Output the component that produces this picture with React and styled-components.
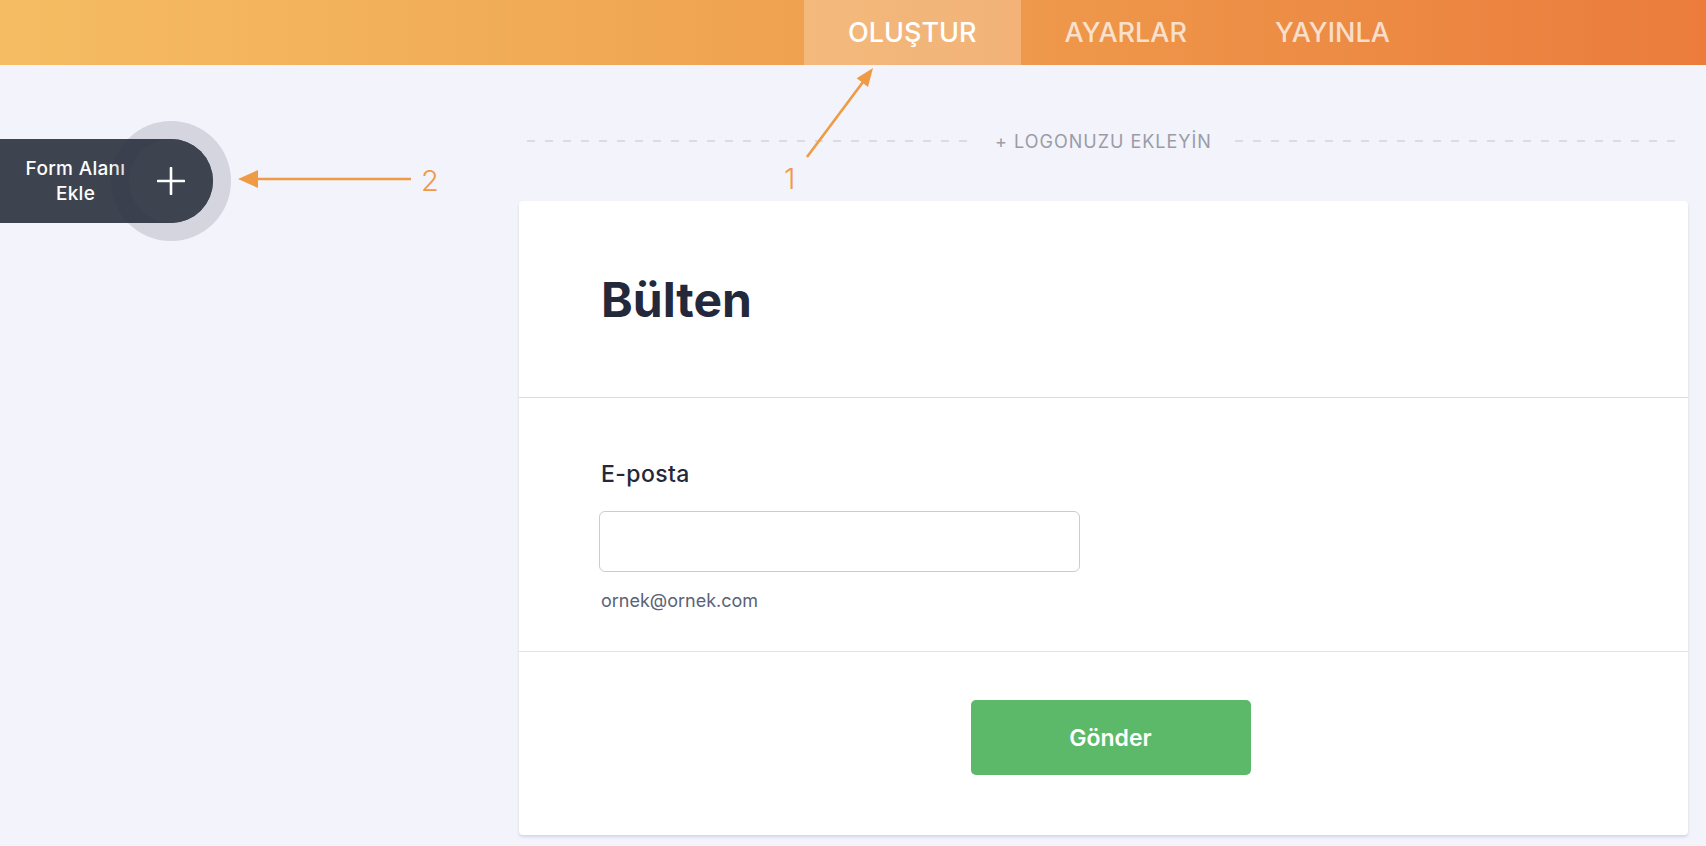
import React from "react";
import styled, { createGlobalStyle } from "styled-components";

const GlobalStyle = createGlobalStyle`
  * {
    box-sizing: border-box;
  }
  body {
    margin: 0;
    background: #f2f3fb;
    font-family: Inter, "Noto Sans", sans-serif;
    overflow: hidden;
  }
`;

const tabs = ["OLUŞTUR", "AYARLAR", "YAYINLA"];

const App = () => {
  return (
    <Page>
      <GlobalStyle />
      <TopBar>
        {tabs.map((t, i) => (
          <Tab key={t} active={i === 0}>
            {t}
          </Tab>
        ))}
      </TopBar>

      <Main>
        <Sidebar>
          <AddField>
            <AddLabel>
              Form Alanı
              <br />
              Ekle
            </AddLabel>
            <PlusCircle>
              <svg width="28" height="28" viewBox="0 0 28 28">
                <path
                  d="M14 1v26M1 14h26"
                  stroke="#fff"
                  strokeWidth="2.6"
                  strokeLinecap="round"
                />
              </svg>
            </PlusCircle>
          </AddField>
        </Sidebar>

        <Content>
          <LogoRow>
            <Dashes />
            <LogoText>+ LOGONUZU EKLEYİN</LogoText>
            <Dashes />
          </LogoRow>

          <Card>
            <TitleSection>
              <Title>Bülten</Title>
            </TitleSection>

            <FieldSection>
              <Label>E-posta</Label>
              <Input type="text" />
              <Hint>ornek@ornek.com</Hint>
            </FieldSection>

            <SubmitSection>
              <SubmitButton>Gönder</SubmitButton>
            </SubmitSection>
          </Card>
        </Content>
      </Main>

      {/* annotation arrows drawn over the screenshot */}
      <Annotations>
        <svg width="1706" height="846" viewBox="0 0 1706 846">
          <g stroke="#ef9a45" strokeWidth="2.6" fill="#ef9a45">
            <line x1="807" y1="157" x2="863" y2="82" />
            <polygon points="873,68 868,87 856.7,78.3" stroke="none" />
            <line x1="411" y1="179" x2="255" y2="179" />
            <polygon points="238,179 258,170 258,188" stroke="none" />
          </g>
        </svg>
        <Num x={784} y={164}>1</Num>
        <Num x={421} y={166}>2</Num>
      </Annotations>
    </Page>
  );
};

export default App;

/* -------------------------------------------------------------------------- */
/*                                   STYLES                                   */
/* -------------------------------------------------------------------------- */
const Page = styled.div`
  position: relative;
  width: 1706px;
  height: 846px;
  background: #f2f3fb;
`;

const TopBar = styled.header`
  height: 65px;
  display: flex;
  align-items: stretch;
  padding-left: 804px;
  background: linear-gradient(90deg, #f5bd63 0%, #efa04f 50%, #eb7c3c 100%);
`;

const Tab = styled.div`
  display: flex;
  align-items: center;
  padding: 0 44px;
  font-size: 27px;
  font-weight: 500;
  color: ${(p) => (p.active ? "#ffffff" : "rgba(255, 255, 255, 0.72)")};
  background: ${(p) => (p.active ? "rgba(255, 255, 255, 0.25)" : "transparent")};
`;

const Main = styled.main`
  display: grid;
  grid-template-columns: 519px 1fr;
  padding-right: 18px;
`;

const Sidebar = styled.aside`
  padding-top: 74px;
`;

const AddField = styled.div`
  display: flex;
  align-items: center;
  width: 213px;
  height: 84px;
  background: #3e444f;
  border-radius: 0 42px 42px 0;
`;

const AddLabel = styled.div`
  flex: 1;
  padding-left: 22px;
  text-align: center;
  color: #ffffff;
  font-size: 19px;
  letter-spacing: 0.3px;
  font-weight: 500;
  line-height: 25px;
`;

const PlusCircle = styled.div`
  width: 84px;
  height: 84px;
  border-radius: 50%;
  background: #3e444f;
  display: flex;
  align-items: center;
  justify-content: center;
  box-shadow: 0 0 0 18px rgba(40, 45, 70, 0.15);
`;

const Content = styled.section`
  padding-top: 64px;
`;

const LogoRow = styled.div`
  height: 24px;
  margin: 0 8px 48px;
  display: flex;
  align-items: center;
  gap: 23px;
`;

const Dashes = styled.div`
  flex: 1;
  height: 2px;
  background: repeating-linear-gradient(
    90deg,
    #dadbe5 0 8px,
    transparent 8px 18px
  );
`;

const LogoText = styled.span`
  font-size: 18px;
  letter-spacing: 1px;
  color: #9b9ca6;
  white-space: nowrap;
`;

const Card = styled.div`
  background: #ffffff;
  border-radius: 4px;
  box-shadow: 0 2px 3px rgba(40, 40, 80, 0.14);
  overflow: hidden;
`;

const TitleSection = styled.div`
  height: 197px;
  display: flex;
  align-items: center;
  padding-left: 82px;
  border-bottom: 1px solid #d9dbe3;
`;

const Title = styled.h1`
  margin: 0;
  font-size: 48px;
  font-weight: 700;
  color: #23293b;
`;

const FieldSection = styled.div`
  display: flex;
  flex-direction: column;
  align-items: flex-start;
  padding: 62px 82px 38px;
  border-bottom: 1px solid #e2e3ea;
`;

const Label = styled.label`
  font-size: 23px;
  letter-spacing: 0.4px;
  line-height: 28px;
  font-weight: 500;
  color: #23293b;
  margin-bottom: 23px;
`;

const Input = styled.input`
  width: 481px;
  height: 61px;
  margin-left: -2px;
  border: 1.5px solid #c9ccd6;
  border-radius: 6px;
  background: #fff;
  outline: none;
`;

const Hint = styled.span`
  margin-top: 17px;
  font-size: 18px;
  line-height: 24px;
  color: #5a6279;
`;

const SubmitSection = styled.div`
  height: 183px;
  display: flex;
  align-items: flex-start;
  justify-content: center;
  padding: 48px 0 0 14px;
`;

const SubmitButton = styled.button`
  width: 280px;
  height: 75px;
  border: none;
  border-radius: 5px;
  background: #5cb96a;
  color: #ffffff;
  font-family: Inter, sans-serif;
  font-size: 23px;
  font-weight: 600;
`;

const Annotations = styled.div`
  position: absolute;
  inset: 0;
  pointer-events: none;

  svg {
    position: absolute;
    left: 0;
    top: 0;
  }
`;

const Num = styled.span`
  position: absolute;
  left: ${(p) => p.x}px;
  top: ${(p) => p.y}px;
  font-size: 29px;
  line-height: 1;
  font-weight: 300;
  color: #ef9a45;
`;
